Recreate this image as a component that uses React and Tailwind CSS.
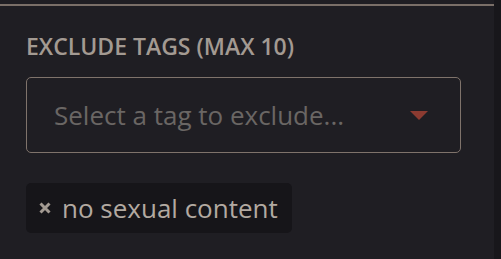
export default function App() {
  return (
    <div
      className="flex h-[259px] w-[501px] bg-[#1f1e23]"
      style={{ fontFamily: '"Open Sans", "Noto Sans", sans-serif' }}
    >
      <div className="flex w-[494px] flex-col">
        <div className="mt-[4px] h-[2px] w-full bg-[#7a6f68]" />
        <div className="px-[26px] pt-[26px]">
          <h3 className="text-[23px] font-semibold uppercase leading-[28px] text-[#a39a92]">
            Exclude tags (max 10)
          </h3>
          <div className="mt-[17px] flex h-[76px] w-[435px] items-center justify-between rounded-[5px] border-[1.5px] border-[#7f736b] pl-[27px] pr-[32px]">
            <span className="text-[26px] leading-none text-[#6a6664]">Select a tag to exclude...</span>
            <svg width="18" height="9" viewBox="0 0 18 9">
              <path d="M0 0 H18 L9 9 Z" fill="#8c3b31" />
            </svg>
          </div>
          <div className="mt-[30px] inline-flex h-[50px] items-center gap-[11px] rounded-[5px] bg-[#161519] pl-[13px] pr-[14px]">
            <svg width="12" height="12" viewBox="0 0 12 12">
              <path d="M1.5 1.5 L10.5 10.5 M10.5 1.5 L1.5 10.5" stroke="#a39a92" strokeWidth="3" />
            </svg>
            <span className="text-[26px] leading-none text-[#b2a9a1]">no sexual content</span>
          </div>
        </div>
      </div>
      <div className="flex-1 bg-[#18171b]" />
    </div>
  )
}
